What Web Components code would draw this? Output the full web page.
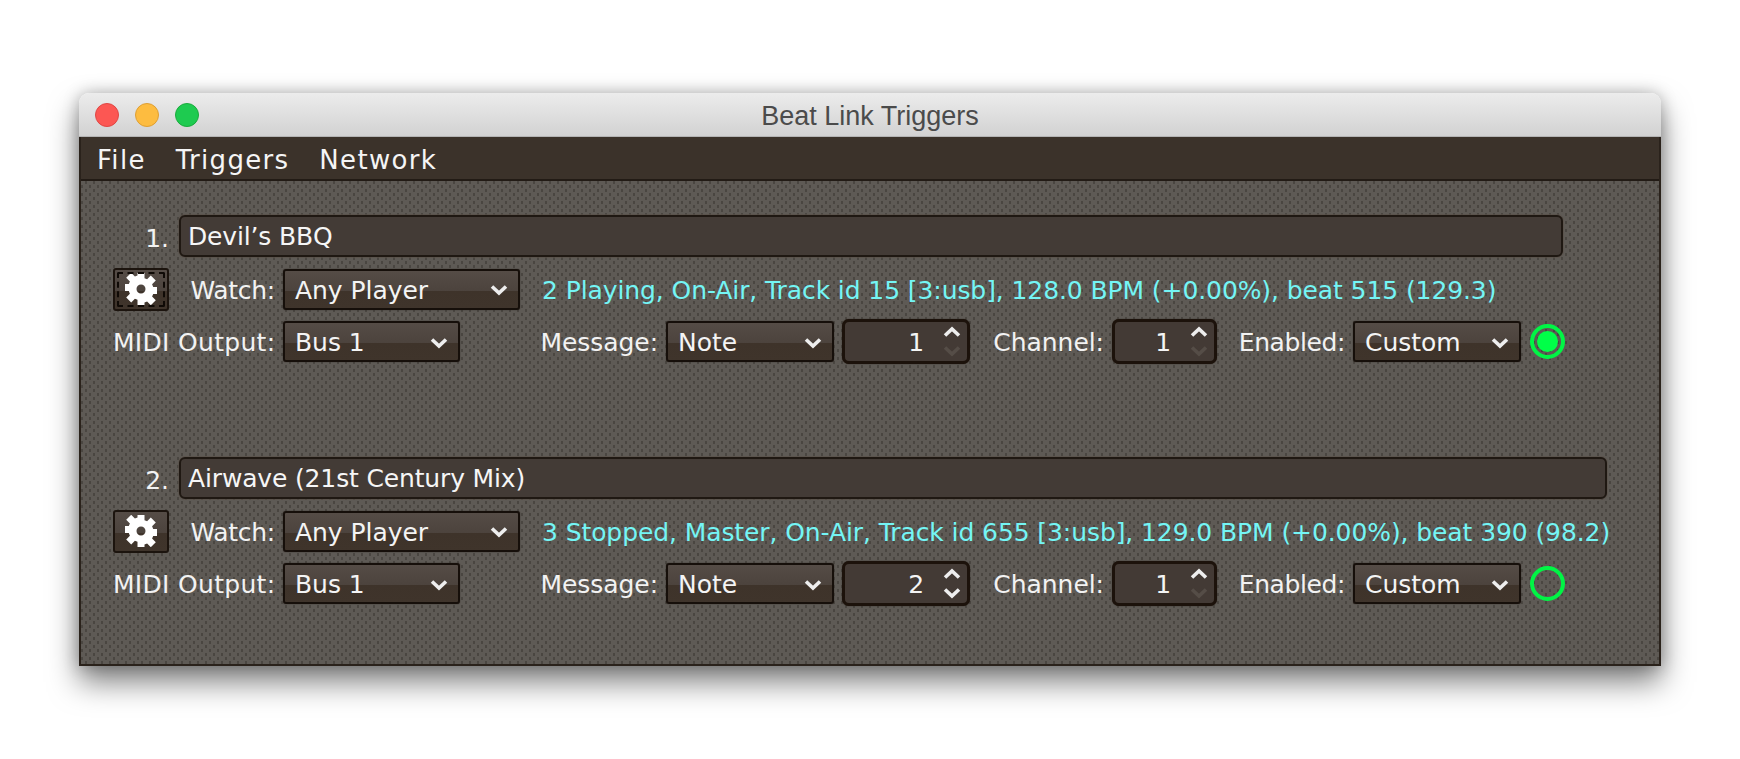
<!DOCTYPE html>
<html>
<head>
<meta charset="utf-8">
<title>Beat Link Triggers</title>
<style>
  html, body { margin: 0; background: #fff; overflow: hidden; }
  body {
    height: 759px;
    padding: 93px 0 0 79px;
    box-sizing: border-box;
    font-family: "DejaVu Sans", sans-serif;
    font-size: 25px;
    letter-spacing: -0.05px;
    color: #f2f2f2;
  }
</style>
</head>
<body>
<mac-window title="Beat Link Triggers">
  <menu-bar><span>File</span><span>Triggers</span><span>Network</span></menu-bar>
  <trigger-row index="1." comment="Devil’s BBQ" note="1" channel="1" field-width="1384"
    status="2 Playing, On-Air, Track id 15 [3:usb], 128.0 BPM (+0.00%), beat 515 (129.3)"
    focused active></trigger-row>
  <trigger-row index="2." comment="Airwave (21st Century Mix)" note="2" channel="1" field-width="1428"
    status="3 Stopped, Master, On-Air, Track id 655 [3:usb], 129.0 BPM (+0.00%), beat 390 (98.2)"></trigger-row>
</mac-window>

<script>
  // Window frame: title bar with the three traffic lights, then slotted content
  class MacWindow extends HTMLElement {
    constructor() {
      super();
      this.attachShadow({ mode: "open" });
      this.shadowRoot.innerHTML = `
        <style>
          :host {
            display: block;
            width: 1582px;
            height: 573px;
            border-radius: 10px 10px 0 0;
            box-shadow: 0 16px 30px rgba(0,0,0,.5), 0 0 16px rgba(0,0,0,.25);
          }
          .title {
            height: 44px;
            box-sizing: border-box;
            display: flex;
            align-items: center;
            position: relative;
            padding-left: 16px;
            gap: 16px;
            border-radius: 10px 10px 0 0;
            background: linear-gradient(#ececec, #d2d2d2);
            border-bottom: 1px solid #b4b4b4;
          }
          .dot { width: 22px; height: 22px; border-radius: 50%; border: 1px solid; }
          .red { background: #fc5753; border-color: #df4744; }
          .amber { background: #fdbc40; border-color: #de9f34; }
          .green { background: #1ecb50; border-color: #1aab3c; }
          .name {
            position: absolute;
            left: 0; right: 0; top: 7px;
            text-align: center;
            font: 27px/32px "Liberation Sans", sans-serif;
            letter-spacing: 0;
            color: #4b4b4b;
          }
          /* dotted panel texture: staggered dark 2x3 rects on an 8px tile */
          .body {
            height: 529px;
            box-sizing: border-box;
            overflow: hidden;
            border: solid #2a221b;
            border-width: 0 2px 2px 2px;
            background-color: #5e5a55;
            background-image:
              conic-gradient(at 2px 3px, transparent 0 75%, #4a4641 0),
              conic-gradient(at 2px 3px, transparent 0 75%, #4a4641 0);
            background-size: 8px 8px;
            background-position: 0 0, 4px 4px;
          }
        </style>
        <div class="title">
          <span class="dot red"></span><span class="dot amber"></span><span class="dot green"></span>
          <div class="name"></div>
        </div>
        <div class="body"><slot></slot></div>
      `;
      this.shadowRoot.querySelector(".name").textContent = this.getAttribute("title");
    }
  }
  customElements.define("mac-window", MacWindow);

  class MenuBar extends HTMLElement {
    constructor() {
      super();
      this.attachShadow({ mode: "open" });
      this.shadowRoot.innerHTML = `
        <style>
          :host {
            display: flex;
            height: 44px;
            box-sizing: border-box;
            align-items: center;
            padding: 3px 0 0 18px;
            gap: 30px;
            background: #3b322a;
            border-bottom: 2px solid #221b15;
            margin: 0 -2px;
            color: #f5f5f5;
            font-size: 26px;
            letter-spacing: 1.3px;
          }
        </style>
        <slot></slot>
      `;
    }
  }
  customElements.define("menu-bar", MenuBar);

  class ComboBox extends HTMLElement {
    constructor() {
      super();
      this.attachShadow({ mode: "open" });
      this.shadowRoot.innerHTML = `
        <style>
          :host {
            display: inline-flex;
            align-items: center;
            justify-content: space-between;
            height: 41px;
            box-sizing: border-box;
            padding: 2px 10px 0 10px;
            border: 2px solid #160f0a;
            border-radius: 3px;
            background: linear-gradient(#554c46, #4c433d 54%, #3e332a 54%, #3f342b);
            box-shadow: 0 0 1px #160f0a;
            color: #f4f4f4;
          }
          svg { display: block; }
        </style>
        <span><slot></slot></span>
        <svg width="18" height="12" viewBox="0 0 18 12"><path d="M2 2.5 9 9 16 2.5" fill="none" stroke="#eeeeee" stroke-width="3.6"/></svg>
      `;
    }
  }
  customElements.define("combo-box", ComboBox);

  // Number spinner, the down arrow is dimmed when the value is at its minimum
  class SpinBox extends HTMLElement {
    constructor() {
      super();
      this.attachShadow({ mode: "open" });
      const value = this.getAttribute("value");
      const downColour = Number(value) > 1 ? "#eeeeee" : "#554d47";
      this.shadowRoot.innerHTML = `
        <style>
          :host {
            display: inline-flex;
            align-items: center;
            justify-content: flex-end;
            height: 45px;
            box-sizing: border-box;
            padding-right: 6px;
            gap: 19px;
            border: 3px solid #1c120b;
            border-radius: 7px;
            background: #433a35;
            box-shadow: 0 0 1px #1c120b;
            color: #f4f4f4;
          }
          span { padding-top: 2px; }
          .arrows { display: flex; flex-direction: column; gap: 7px; }
          svg { display: block; }
        </style>
        <span>${value}</span>
        <div class="arrows">
          <svg width="18" height="12" viewBox="0 0 18 12"><path d="M2 9.5 9 3 16 9.5" fill="none" stroke="#eeeeee" stroke-width="3.6"/></svg>
          <svg width="18" height="12" viewBox="0 0 18 12"><path d="M2 2.5 9 9 16 2.5" fill="none" stroke="${downColour}" stroke-width="3.6"/></svg>
        </div>
      `;
    }
  }
  customElements.define("spin-box", SpinBox);

  class GearButton extends HTMLElement {
    constructor() {
      super();
      this.attachShadow({ mode: "open" });
      this.shadowRoot.innerHTML = `
        <style>
          :host {
            display: inline-flex;
            align-items: center;
            justify-content: center;
            position: relative;
            width: 56px;
            height: 43px;
            box-sizing: border-box;
            border: 2px solid #1c140e;
            border-radius: 3px;
            background: linear-gradient(#554c46, #4c433d 54%, #3e332a 54%, #3f342b);
          }
          :host([focused])::after {
            content: "";
            position: absolute;
            inset: 2px;
            border: 2px dashed #0f0a06;
            border-radius: 2px;
          }
          svg { display: block; }
        </style>
        <svg width="32" height="32" viewBox="0 0 32 32">
          <path fill-rule="evenodd" fill="#ffffff" d="M12.5 0h7v5.2l2.6 1.1 3.7-3.7 5 5-3.7 3.7 1.1 2.6H32v7h-3.8l-1.1 2.6 3.7 3.7-5 5-3.7-3.7-2.6 1.1V32h-7v-5.2l-2.6-1.1-3.7 3.7-5-5 3.7-3.7-1.1-2.6H0v-7h3.8l1.1-2.6-3.7-3.7 5-5 3.7 3.7 2.6-1.1zM16 11.5a4.5 4.5 0 1 0 0 9 4.5 4.5 0 0 0 0-9z"/>
        </svg>
      `;
    }
  }
  customElements.define("gear-button", GearButton);

  // Green ring, gets a filled centre when the trigger is active
  class StateLed extends HTMLElement {
    constructor() {
      super();
      this.attachShadow({ mode: "open" });
      this.shadowRoot.innerHTML = `
        <style>
          :host {
            display: inline-flex;
            align-items: center;
            justify-content: center;
            width: 35px;
            height: 35px;
            box-sizing: border-box;
            border: 4px solid #00f545;
            border-radius: 50%;
          }
          :host([active])::before {
            content: "";
            width: 21px;
            height: 21px;
            border-radius: 50%;
            background: #00ff48;
          }
        </style>
      `;
    }
  }
  customElements.define("state-led", StateLed);

  class TriggerRow extends HTMLElement {
    constructor() {
      super();
      this.attachShadow({ mode: "open" });
      this.render();
    }

    render() {
      const attr = (name) => this.getAttribute(name);
      this.shadowRoot.innerHTML = `
        <style>
          :host {
            display: flex;
            flex-direction: column;
            height: 242px;
            box-sizing: border-box;
            padding-left: 32px;
          }
          :host(:first-of-type) { margin-top: 34px; }
          .line { display: flex; align-items: center; }
          .first { height: 42px; margin-bottom: 10px; }
          .second { height: 44px; margin-bottom: 8px; }
          .third { height: 45px; }
          .label { text-align: right; white-space: nowrap; flex: none; padding: 2px 8px 0 0; box-sizing: border-box; }
          .num { width: 66px; padding-right: 10px; padding-top: 4px; }
          .field {
            height: 42px;
            box-sizing: border-box;
            padding: 0 7px;
            display: flex;
            align-items: center;
            border: 2px solid #1f1812;
            border-radius: 6px;
            background: #433b36;
            color: #f6f6f6;
            letter-spacing: -0.15px;
            box-shadow: 0 0 0 1px rgba(90,80,72,.6);
          }
          .status { margin-left: 22px; padding-top: 2px; color: #74f5f5; white-space: nowrap; letter-spacing: -0.09px; }
          combo-box, spin-box { flex: none; }
        </style>
        <div class="line first">
          <div class="label num">${attr("index")}</div>
          <div class="field" style="width:${attr("field-width")}px">${attr("comment")}</div>
        </div>
        <div class="line second">
          <gear-button ${this.hasAttribute("focused") ? "focused" : ""}></gear-button>
          <div class="label" style="width:114px;letter-spacing:-.3px">Watch:</div>
          <combo-box style="width:237px">Any Player</combo-box>
          <div class="status">${attr("status")}</div>
        </div>
        <div class="line third">
          <div class="label" style="width:170px;letter-spacing:.3px">MIDI Output:</div>
          <combo-box style="width:177px">Bus 1</combo-box>
          <div class="label" style="width:206px">Message:</div>
          <combo-box style="width:168px">Note</combo-box>
          <spin-box style="width:128px;margin-left:8px" value="${attr("note")}"></spin-box>
          <div class="label" style="width:142px">Channel:</div>
          <spin-box style="width:105px" value="${attr("channel")}"></spin-box>
          <div class="label" style="width:136px;letter-spacing:-.4px">Enabled:</div>
          <combo-box style="width:168px">Custom</combo-box>
          <state-led style="margin-left:9px" ${this.hasAttribute("active") ? "active" : ""}></state-led>
        </div>
      `;
    }
  }
  customElements.define("trigger-row", TriggerRow);
</script>
</body>
</html>
